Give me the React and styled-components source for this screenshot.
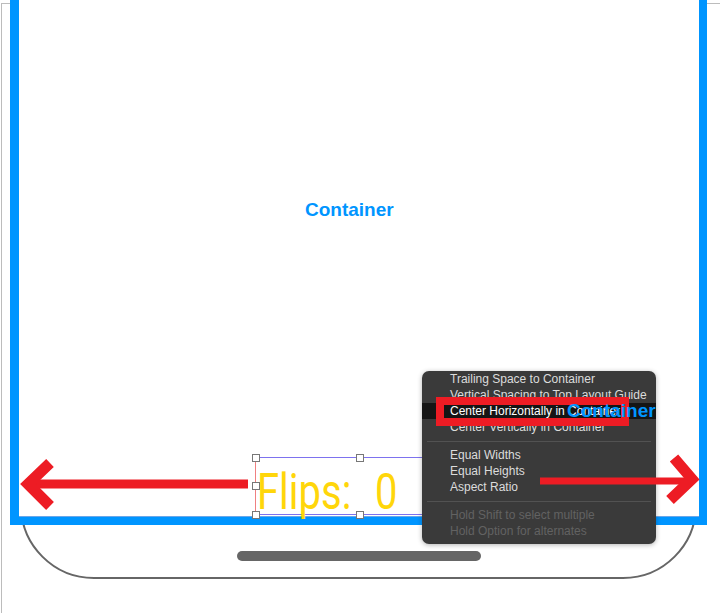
import React from 'react';
import styled, { createGlobalStyle } from 'styled-components';

const GlobalStyle = createGlobalStyle`
  body {
    margin: 0;
    background: #fff;
  }
`;

const BLUE = '#0095ff';
const RED = '#ed1c24';

// the storyboard canvas
const Canvas = styled.div`
  position: relative;
  width: 720px;
  height: 613px;
  overflow: hidden;
  background: #fff;
  font-family: "Liberation Sans", Arial, sans-serif;
`;

const CanvasEdge = styled.div`
  position: absolute;
  left: 1px;
  top: 3px;
  right: 0;
  bottom: 0;
  border-top: 1px solid #bcbcbc;
  border-left: 1px solid #bcbcbc;
`;

const DeviceOutline = styled.div`
  position: absolute;
  left: 20px;
  top: -100px;
  width: 677px;
  height: 679px;
  box-sizing: border-box;
  border: 2px solid #666;
  border-radius: 0 0 74px 74px;
  display: flex;
  align-items: flex-end;
  justify-content: center;
  padding-bottom: 16px;
`;

const HomeIndicator = styled.div`
  width: 244px;
  height: 10px;
  border-radius: 5px;
  background: #666;
`;

const ContainerView = styled.div`
  position: absolute;
  left: 10px;
  top: -20px;
  width: 697px;
  height: 545px;
  box-sizing: border-box;
  border: solid ${BLUE};
  border-width: 0 8px 8px 9px;
  background: #fff;
  box-shadow: inset 0 -1px 0 #6aa6e8;
  display: flex;
  flex-direction: column;
  align-items: flex-start;
`;

const ViewTitle = styled.div`
  margin: 219px 0 0 286px;
  font-size: 19px;
  line-height: 22px;
  font-weight: bold;
  color: ${BLUE};
`;

const LabelFrame = styled.div`
  position: relative;
  margin: auto 0 2px 236px;
  width: 208px;
  height: 58px;
  box-sizing: border-box;
  border-top: 1px solid #7d72ee;
  border-bottom: 1px solid #7d72ee;
  border-left: 1px solid #f08080;
  padding: 9px 0 0 1px;
`;

const FlipsText = styled.div`
  font-family: Roboto, "Liberation Sans", sans-serif;
  font-weight: 400;
  font-size: 50px;
  line-height: 50px;
  word-spacing: 17px;
  color: #ffd60a;
  white-space: nowrap;
  transform: scaleX(0.8);
  transform-origin: left center;
`;

const Handle = styled.span`
  position: absolute;
  left: ${p => p.$x}px;
  top: ${p => p.$y}px;
  width: 6px;
  height: 6px;
  margin: -4px 0 0 -4px;
  background: #fff;
  border: 1px solid #777;
`;

const ContextMenu = styled.div`
  position: absolute;
  left: 422px;
  top: 371px;
  width: 234px;
  height: 173px;
  box-sizing: border-box;
  padding-bottom: 5px;
  background: #3a3a3a;
  border-radius: 7px;
  box-shadow: 0 1px 5px rgba(0, 0, 0, 0.3);
  font-size: 12px;
  overflow: hidden;
`;

const MenuItem = styled.div`
  height: 16px;
  line-height: 16px;
  padding-left: 28px;
  white-space: nowrap;
  color: ${p => (p.$disabled ? '#626262' : p.$active ? '#fff' : '#dcdcdc')};
  background: ${p => (p.$active ? '#151515' : 'transparent')};
`;

const MenuSeparator = styled.div`
  height: 1px;
  margin: 6px 5px 5px;
  background: #525252;
`;

const Callout = styled.div`
  position: absolute;
  left: 436px;
  top: 397px;
  width: 193px;
  height: 29px;
  box-sizing: border-box;
  border: 8px solid ${RED};
`;

const DragGhost = styled.div`
  position: absolute;
  left: 567px;
  top: 400px;
  font-size: 19px;
  line-height: 22px;
  font-weight: bold;
  color: ${BLUE};
`;

const Overlay = styled.svg`
  position: absolute;
  left: 0;
  top: 0;
  pointer-events: none;
`;

const Arrows = () => (
  <Overlay width="720" height="613" viewBox="0 0 720 613">
    <g fill="none" stroke={RED} strokeLinejoin="miter">
      <path d="M248 484 H30" strokeWidth="9" />
      <path d="M50 463 L28 484 L50 506" strokeWidth="11" />
      <path d="M540 481 H688" strokeWidth="7" />
      <path d="M674 458 L692 479 L670 500" strokeWidth="11" />
    </g>
  </Overlay>
);

const App = () => {
  return (
    <Canvas>
      <GlobalStyle />
      <CanvasEdge />
      <DeviceOutline>
        <HomeIndicator />
      </DeviceOutline>
      <ContainerView>
        <ViewTitle>Container</ViewTitle>
        <LabelFrame>
          <FlipsText>Flips: 0</FlipsText>
          <Handle $x={0} $y={0} />
          <Handle $x={104} $y={0} />
          <Handle $x={0} $y={28} />
          <Handle $x={0} $y={57} />
          <Handle $x={104} $y={57} />
        </LabelFrame>
      </ContainerView>
      <ContextMenu>
        <MenuItem>Trailing Space to Container</MenuItem>
        <MenuItem>Vertical Spacing to Top Layout Guide</MenuItem>
        <MenuItem $active>Center Horizontally in Container</MenuItem>
        <MenuItem>Center Vertically in Container</MenuItem>
        <MenuSeparator />
        <MenuItem>Equal Widths</MenuItem>
        <MenuItem>Equal Heights</MenuItem>
        <MenuItem>Aspect Ratio</MenuItem>
        <MenuSeparator />
        <MenuItem $disabled>Hold Shift to select multiple</MenuItem>
        <MenuItem $disabled>Hold Option for alternates</MenuItem>
      </ContextMenu>
      <Callout />
      <DragGhost>Container</DragGhost>
      <Arrows />
    </Canvas>
  );
};

export default App;
